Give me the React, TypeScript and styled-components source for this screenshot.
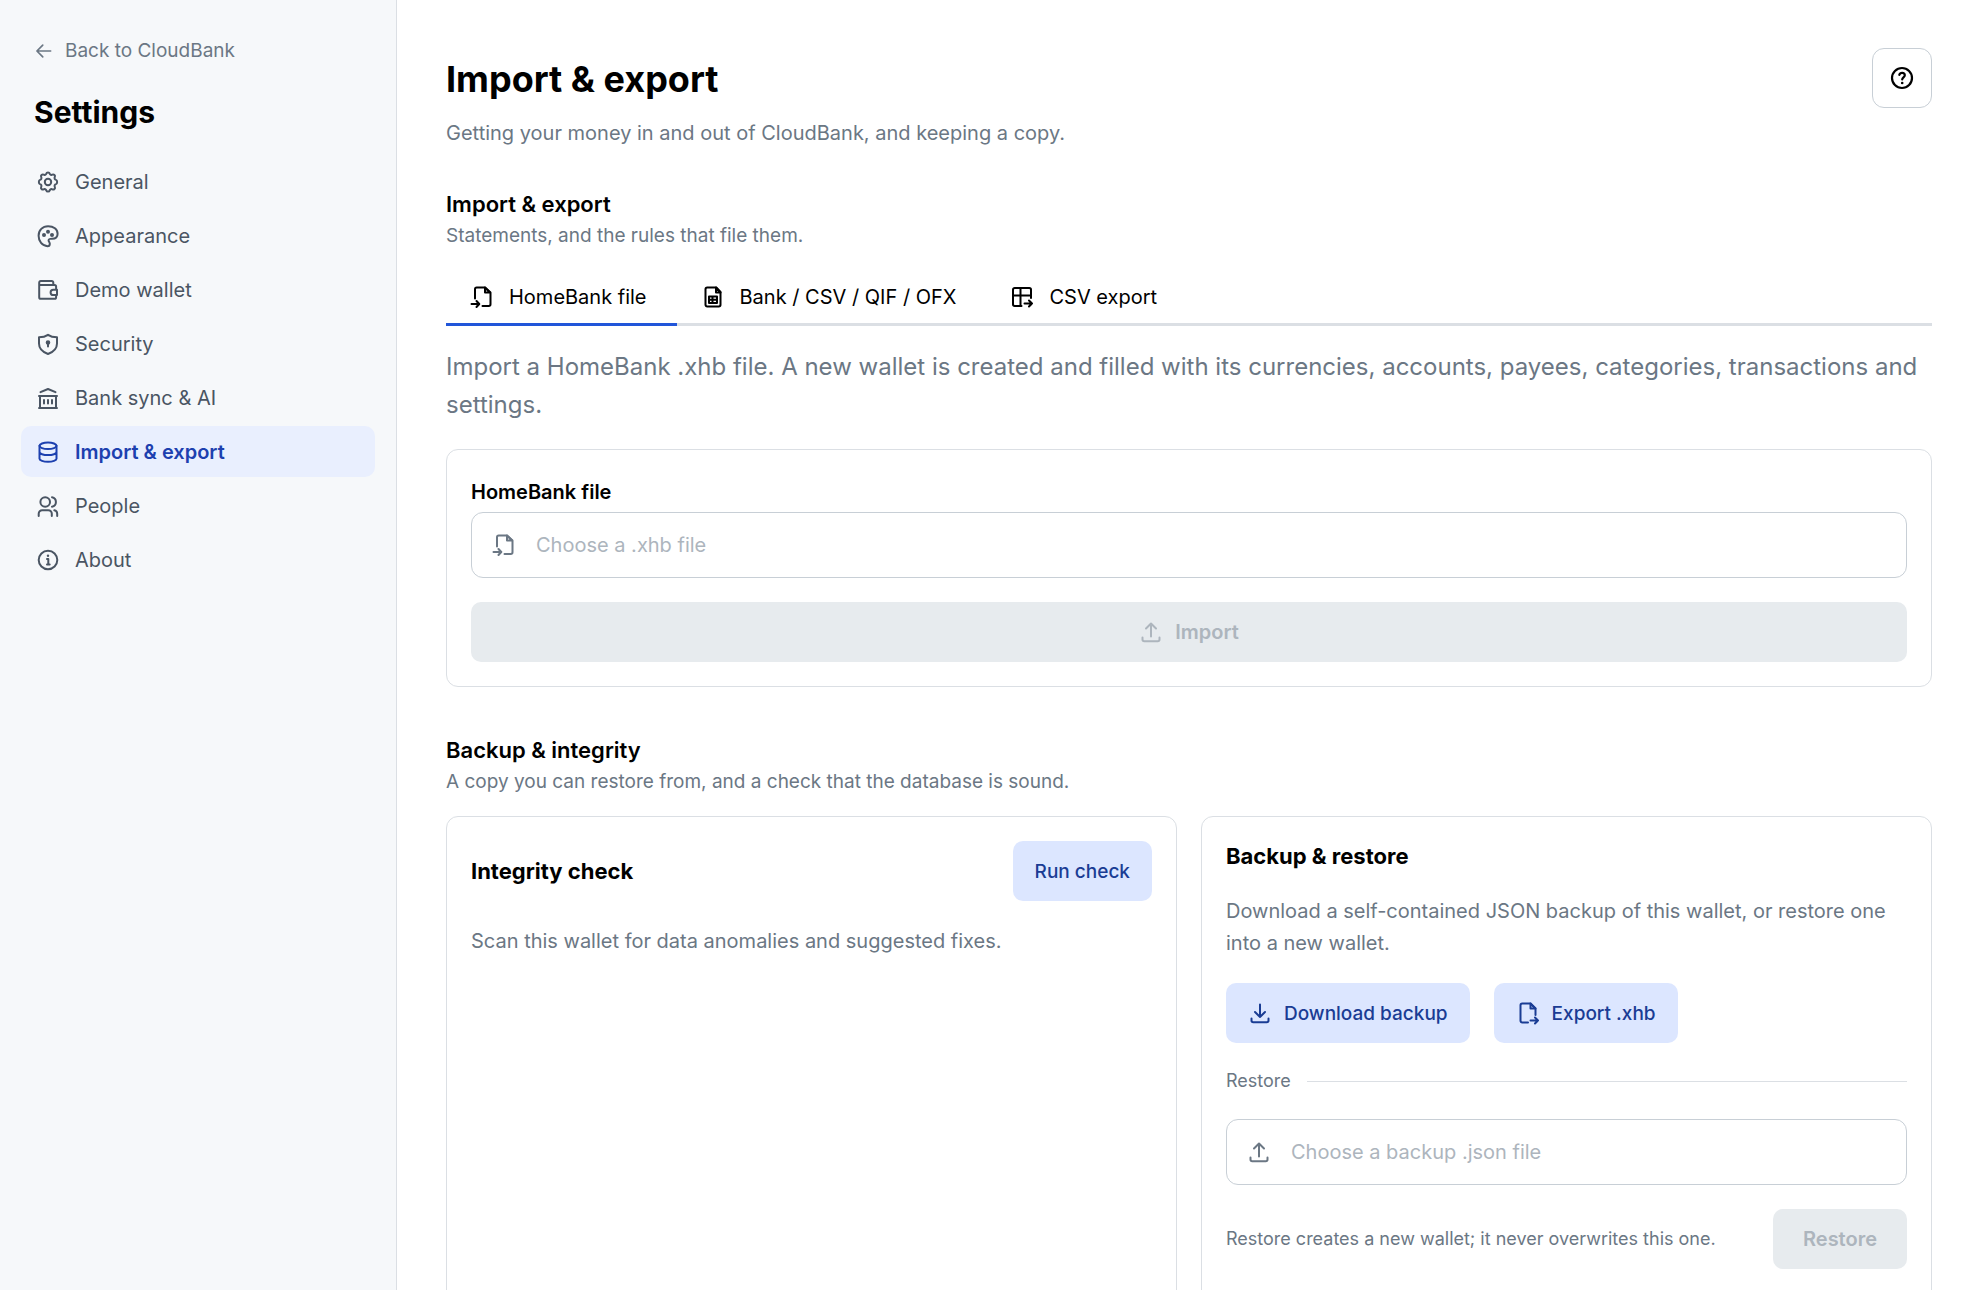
import React, { useState } from "react";
import styled, { createGlobalStyle, css } from "styled-components";

const c = {
  text: "#000000",
  muted: "#6b7784",
  nav: "#4a5563",
  placeholder: "#adb5bd",
  line: "#dbdfe4",
  field: "#c8cfd6",
  disabled: "#e7ebee",
  sidebar: "#f6f8fa",
  brand: "#2156d9",
  brandText: "#1a3c94",
  brandNav: "#1d40af",
  brandLight: "#dce6ff",
  brandSoft: "#e9effe",
};

const GlobalStyle = createGlobalStyle`
  *, *::before, *::after { box-sizing: border-box; }
  body {
    margin: 0;
    background: #fff;
    color: ${c.text};
    font-family: Inter, "Open Sans", sans-serif;
  }
  h1, h2, h3, p { margin: 0; }
  button, input { font-family: inherit; }
`;

/* ---------- icons ---------- */

type IconProps = { size?: number; weight?: number; children?: React.ReactNode };

const Svg = ({ size = 24, weight = 2, children }: IconProps) => (
  <svg
    width={size}
    height={size}
    viewBox="0 0 24 24"
    fill="none"
    stroke="currentColor"
    strokeWidth={weight}
    strokeLinecap="round"
    strokeLinejoin="round"
    aria-hidden="true"
  >
    {children}
  </svg>
);

const ArrowLeft = () => (
  <Svg size={20}>
    <path d="M20 12H4M10.500 5 3.500 12l7 7" />
  </Svg>
);
const Gear = () => (
  <Svg>
    <circle cx="12" cy="12" r="3.200" />
    <path d="M10.300 3.600c.4-1.500 3-1.500 3.400 0a1.900 1.900 0 0 0 2.700 1.100c1.500-.8 3.200.9 2.400 2.400a1.900 1.900 0 0 0 1.200 2.800c1.500.4 1.500 3.800 0 4.200a1.900 1.900 0 0 0-1.200 2.800c.8 1.500-.9 3.200-2.400 2.400a1.900 1.900 0 0 0-2.700 1.100c-.4 1.500-3 1.500-3.400 0a1.900 1.900 0 0 0-2.700-1.100c-1.500.8-3.200-.9-2.400-2.400a1.900 1.900 0 0 0-1.200-2.800c-1.500-.4-1.500-3.800 0-4.200a1.900 1.900 0 0 0 1.200-2.800c-.8-1.500.9-3.200 2.400-2.400a1.900 1.900 0 0 0 2.700-1.100Z" />
  </Svg>
);
const Palette = () => (
  <Svg>
    <path d="M12 23c-5.500-.4-9-5-9-10.500C3 7 7 3 12.500 3 18 3 22 6 22 10.500c0 3.500-2.500 5-5.500 5-2.500 0-3.500 0-3.500 1.700 0 1.500 1.200 1.800 1.200 3.300 0 1.500-1 2.500-2.200 2.500Z" transform="translate(-.4 -.8)" />
    <g fill="currentColor" stroke="none">
      <circle cx="8" cy="11" r="2" />
      <circle cx="12" cy="7.700" r="2" />
      <circle cx="16" cy="11" r="2" />
    </g>
  </Svg>
);
const Wallet = () => (
  <Svg>
    <path d="M3.200 7V4.700A1.600 1.600 0 0 1 4.800 3h10.900a1.600 1.600 0 0 1 1.600 1.700V7M3.200 7v12.200a1.600 1.600 0 0 0 1.600 1.600h13.700a1.600 1.600 0 0 0 1.600-1.600V18M3.200 7h15.300a1.600 1.600 0 0 1 1.600 1.600V11" />
    <path d="M21 11.700h-3.700a2.700 2.700 0 0 0 0 5.400H21Z" />
  </Svg>
);
const Shield = () => (
  <Svg>
    <path d="M12 2.800c-2.500 1.700-5.500 2.400-9 2.500v6.200c0 5 3.500 8.500 9 10.500 5.500-2 9-5.500 9-10.500V5.300c-3.500-.1-6.500-.8-9-2.500Z" />
    <circle cx="12" cy="10.500" r="1.300" fill="currentColor" />
    <path d="M12 11.500v3" />
  </Svg>
);
const Bank = () => (
  <Svg>
    <path d="M4.500 6.200 12 3l7.500 3.200M3 10h18M3 22h18M4 10v12M20 10v12M8 14v3.500M12 14v3.500M16 14v3.500" />
  </Svg>
);
const Database = () => (
  <Svg>
    <ellipse cx="12" cy="5.800" rx="8.500" ry="3.200" />
    <path d="M3.500 5.800v6.200c0 1.700 3.800 3.100 8.500 3.100s8.500-1.400 8.500-3.100V5.800M3.500 12v6.700c0 1.700 3.800 3.100 8.500 3.100s8.500-1.400 8.500-3.100V12" />
  </Svg>
);
const People = () => (
  <Svg>
    <circle cx="9.200" cy="8" r="4.800" />
    <path d="M2.700 22v-2.300a3.500 3.500 0 0 1 3.500-3.500h6.100a3.500 3.500 0 0 1 3.500 3.500V22M16 3.200a4.900 4.900 0 0 1 0 9.600M18.300 16.300a3.500 3.500 0 0 1 2.900 3.400V22" />
  </Svg>
);
const Info = () => (
  <Svg>
    <circle cx="12" cy="12" r="9.300" />
    <path d="M11 11h1.300v5.200M11 16.500h2.700" />
    <circle cx="12" cy="7.800" r="1.200" fill="currentColor" stroke="none" />
  </Svg>
);
const FileImport = () => (
  <Svg>
    <path d="M5 13.500V4.200A1.700 1.700 0 0 1 6.700 2.500h8.300L20.500 7.500v11.800a1.700 1.700 0 0 1-1.700 1.700H12.500" />
    <path d="M15 2.500V7.500H20ZM1.500 19h7.500M6.500 16l2.800 3-2.800 3" />
  </Svg>
);
const FileExport = () => (
  <Svg>
    <path d="M12 21.500H6.200a1.700 1.700 0 0 1-1.700-1.700V4.200A1.700 1.700 0 0 1 6.200 2.500h8.300L19.500 7.500V14" />
    <path d="M14.500 2.500v5h5ZM14.500 19.500h7.500M19 16.500l3 3-3 3" />
  </Svg>
);
const FileSheet = () => (
  <Svg>
    <path d="M4.500 19.800V4.200A1.700 1.700 0 0 1 6.200 2.500h9L19.500 7v12.800a1.700 1.700 0 0 1-1.700 1.700H6.200a1.700 1.700 0 0 1-1.700-1.700Z" />
    <path d="M15 2.500v5h4.500ZM8 11.500h8v6.500H8ZM8 14.700h8M11.500 11.500v6.500" />
  </Svg>
);
const TableExport = () => (
  <Svg>
    <path d="M11.500 21H4.700A1.700 1.700 0 0 1 3 19.300V4.700A1.700 1.700 0 0 1 4.700 3h14.600A1.700 1.700 0 0 1 21 4.700V13M3 10.500h18M10.500 3v18M14.500 18.500H22M19 15.500l3 3-3 3" />
  </Svg>
);
const Upload = () => (
  <Svg>
    <path d="M3.500 17.500v2A1.700 1.700 0 0 0 5.200 21.200h13.600a1.700 1.700 0 0 0 1.700-1.700v-2M12 16.500V3.500M7 8.500l5-5 5 5" />
  </Svg>
);
const Download = () => (
  <Svg>
    <path d="M3.500 17.500v2A1.700 1.700 0 0 0 5.200 21.200h13.600a1.700 1.700 0 0 0 1.700-1.700v-2M12 3.500v12.500M7 11l5 5 5-5" />
  </Svg>
);
const Help = () => (
  <Svg weight={2.2}>
    <circle cx="12" cy="12" r="10" />
    <path d="M9.300 8.900C9.800 7.300 11 6.800 12.100 6.800c1.500 0 2.700 1 2.700 2.500 0 2-2.600 2.200-2.600 4.200" />
    <circle cx="12.200" cy="17" r="1.300" fill="currentColor" stroke="none" />
  </Svg>
);

/* ---------- layout ---------- */

const Shell = styled.div`
  display: flex;
  align-items: flex-start;
  min-height: 100vh;
`;

const Sidebar = styled.aside`
  position: sticky;
  top: 0;
  flex: 0 0 397px;
  height: 100vh;
  padding: 37px 21px;
  background: ${c.sidebar};
  border-right: 1px solid ${c.line};
`;

const BackLink = styled.a`
  display: flex;
  align-items: center;
  gap: 11px;
  padding-left: 13px;
  font-size: 19px;
  line-height: 28px;
  color: ${c.muted};
  text-decoration: none;
`;

const SidebarTitle = styled.h2`
  margin: 29px 0 26px;
  padding-left: 13px;
  font-size: 30px;
  line-height: 36px;
  font-weight: 700;
`;

const Nav = styled.nav`
  display: flex;
  flex-direction: column;
  gap: 3px;
`;

const NavLink = styled.a<{ $active: boolean }>`
  display: flex;
  align-items: center;
  gap: 15px;
  height: 51px;
  padding: 0 15px;
  border-radius: 10px;
  font-size: 20px;
  color: ${c.nav};
  text-decoration: none;
  ${(p) =>
    p.$active &&
    css`
      background: ${c.brandSoft};
      color: ${c.brandNav};
      font-weight: 600;
    `}
`;

const Main = styled.main`
  flex: 1;
  min-width: 0;
  padding: 48px 48px 48px 49px;
`;

const PageHeader = styled.header`
  display: flex;
  justify-content: space-between;
  align-items: flex-start;
  margin-bottom: 41px;
`;

const PageHeading = styled.div`
  display: flex;
  flex-direction: column;
  gap: 15px;
  padding-top: 8px;
`;

const PageTitle = styled.h1`
  font-size: 36px;
  line-height: 46px;
  font-weight: 700;
`;

const Text = styled.p`
  font-size: 20px;
  line-height: 32px;
  color: ${c.muted};
`;

const Lede = styled.p`
  font-size: 24px;
  line-height: 38px;
  color: ${c.muted};
`;

const IconButton = styled.button`
  display: grid;
  place-items: center;
  width: 60px;
  height: 60px;
  padding: 0;
  background: #fff;
  border: 1px solid ${c.field};
  border-radius: 12px;
  color: ${c.text};
`;

const Section = styled.section`
  & + & {
    margin-top: 49px;
  }
`;

const SectionHeader = styled.header`
  display: flex;
  flex-direction: column;
  gap: 4px;
  margin-bottom: 20px;
`;

const SectionTitle = styled.h2`
  font-size: 22px;
  line-height: 28px;
  font-weight: 600;
`;

const SectionNote = styled.p`
  font-size: 19px;
  line-height: 28px;
  color: ${c.muted};
`;

const TabList = styled.div`
  display: flex;
  margin-bottom: 22px;
  box-shadow: inset 0 -3px ${c.line};
`;

const Tab = styled.button<{ $active: boolean }>`
  display: flex;
  align-items: center;
  gap: 15px;
  height: 56px;
  padding: 0 30px 0 24px;
  background: none;
  border: 0;
  border-bottom: 3px solid ${(p) => (p.$active ? c.brand : "transparent")};
  font-size: 20px;
  color: ${c.text};
`;

const TabPanel = styled.div`
  display: flex;
  flex-direction: column;
  gap: 25px;
`;

const Card = styled.div`
  display: flex;
  flex-direction: column;
  gap: 24px;
  padding: 24px;
  background: #fff;
  border: 1px solid ${c.line};
  border-radius: 12px;
`;

const CardTitle = styled.h3`
  font-size: 22px;
  line-height: 30px;
  font-weight: 700;
`;

const Row = styled.div<{ $spread?: boolean }>`
  display: flex;
  align-items: center;
  justify-content: ${(p) => (p.$spread ? "space-between" : "flex-start")};
  gap: 24px;
`;

const CardGrid = styled.div`
  display: grid;
  grid-template-columns: repeat(2, minmax(0, 1fr));
  gap: 24px;

  ${Card} {
    padding-bottom: 48px;
  }
`;

const Field = styled.div`
  display: flex;
  flex-direction: column;
  gap: 2px;
`;

const FieldLabel = styled.label`
  font-size: 20px;
  line-height: 36px;
  font-weight: 600;
`;

const Picker = styled.div`
  display: flex;
  align-items: center;
  gap: 20px;
  height: 66px;
  padding: 0 20px;
  border: 1px solid ${c.field};
  border-radius: 12px;
  color: ${c.muted};

  svg {
    flex: none;
  }
`;

const PickerInput = styled.input`
  flex: 1;
  min-width: 0;
  padding: 0;
  background: none;
  border: 0;
  outline: 0;
  font-size: 20px;
  color: ${c.text};

  &::placeholder {
    color: ${c.placeholder};
    opacity: 1;
  }
`;

const Button = styled.button<{ $large?: boolean }>`
  display: flex;
  align-items: center;
  justify-content: center;
  gap: 12px;
  height: 60px;
  padding: 0 22px;
  background: ${c.brandLight};
  border: 0;
  border-radius: 10px;
  font-size: ${(p) => (p.$large ? 20 : 19)}px;
  font-weight: ${(p) => (p.$large ? 600 : 500)};
  color: ${c.brandText};
  white-space: nowrap;

  &:disabled {
    background: ${c.disabled};
    color: ${c.placeholder};
    padding: 0 30px;
  }
`;

const Divider = styled.div`
  display: flex;
  align-items: center;
  gap: 16px;
  font-size: 18px;
  line-height: 28px;
  color: ${c.muted};

  &::after {
    content: "";
    flex: 1;
    height: 1px;
    background: ${c.line};
  }
`;

const Hint = styled.p`
  font-size: 18px;
  line-height: 28px;
  color: ${c.muted};
`;

/* ---------- page ---------- */

const navItems = [
  { label: "General", icon: <Gear /> },
  { label: "Appearance", icon: <Palette /> },
  { label: "Demo wallet", icon: <Wallet /> },
  { label: "Security", icon: <Shield /> },
  { label: "Bank sync & AI", icon: <Bank /> },
  { label: "Import & export", icon: <Database />, active: true },
  { label: "People", icon: <People /> },
  { label: "About", icon: <Info /> },
];

const tabs = [
  { label: "HomeBank file", icon: <FileImport /> },
  { label: "Bank / CSV / QIF / OFX", icon: <FileSheet /> },
  { label: "CSV export", icon: <TableExport /> },
];

export default function App() {
  const [tab, setTab] = useState(0);

  return (
    <>
      <GlobalStyle />
      <Shell>
        <Sidebar>
          <BackLink href="#">
            <ArrowLeft />
            Back to CloudBank
          </BackLink>
          <SidebarTitle>Settings</SidebarTitle>
          <Nav aria-label="Settings">
            {navItems.map((item) => (
              <NavLink
                key={item.label}
                href="#"
                $active={!!item.active}
                aria-current={item.active ? "page" : undefined}
              >
                {item.icon}
                {item.label}
              </NavLink>
            ))}
          </Nav>
        </Sidebar>

        <Main>
          <PageHeader>
            <PageHeading>
              <PageTitle>Import &amp; export</PageTitle>
              <Text>Getting your money in and out of CloudBank, and keeping a copy.</Text>
            </PageHeading>
            <IconButton type="button" aria-label="Help">
              <Help />
            </IconButton>
          </PageHeader>

          <Section>
            <SectionHeader>
              <SectionTitle>Import &amp; export</SectionTitle>
              <SectionNote>Statements, and the rules that file them.</SectionNote>
            </SectionHeader>
            <TabList role="tablist">
              {tabs.map((t, i) => (
                <Tab
                  key={t.label}
                  type="button"
                  role="tab"
                  aria-selected={i === tab}
                  $active={i === tab}
                  onClick={() => setTab(i)}
                >
                  {t.icon}
                  {t.label}
                </Tab>
              ))}
            </TabList>
            <TabPanel role="tabpanel">
              <Lede>
                Import a HomeBank .xhb file. A new wallet is created and filled with its currencies,
                accounts, payees, categories, transactions and settings.
              </Lede>
              <Card>
                <Field>
                  <FieldLabel htmlFor="homebank-file">HomeBank file</FieldLabel>
                  <Picker>
                    <FileImport />
                    <PickerInput id="homebank-file" readOnly placeholder="Choose a .xhb file" />
                  </Picker>
                </Field>
                <Button type="button" $large disabled>
                  <Upload />
                  Import
                </Button>
              </Card>
            </TabPanel>
          </Section>

          <Section>
            <SectionHeader>
              <SectionTitle>Backup &amp; integrity</SectionTitle>
              <SectionNote>
                A copy you can restore from, and a check that the database is sound.
              </SectionNote>
            </SectionHeader>
            <CardGrid>
              <Card>
                <Row $spread>
                  <CardTitle>Integrity check</CardTitle>
                  <Button type="button">Run check</Button>
                </Row>
                <Text>Scan this wallet for data anomalies and suggested fixes.</Text>
              </Card>
              <Card>
                <CardTitle>Backup &amp; restore</CardTitle>
                <Text>
                  Download a self-contained JSON backup of this wallet, or restore one into a new
                  wallet.
                </Text>
                <Row>
                  <Button type="button">
                    <Download />
                    Download backup
                  </Button>
                  <Button type="button">
                    <FileExport />
                    Export .xhb
                  </Button>
                </Row>
                <Divider>Restore</Divider>
                <Picker>
                  <Upload />
                  <PickerInput
                    readOnly
                    aria-label="Backup file"
                    placeholder="Choose a backup .json file"
                  />
                </Picker>
                <Row $spread>
                  <Hint>Restore creates a new wallet; it never overwrites this one.</Hint>
                  <Button type="button" $large disabled>
                    Restore
                  </Button>
                </Row>
              </Card>
            </CardGrid>
          </Section>
        </Main>
      </Shell>
    </>
  );
}
